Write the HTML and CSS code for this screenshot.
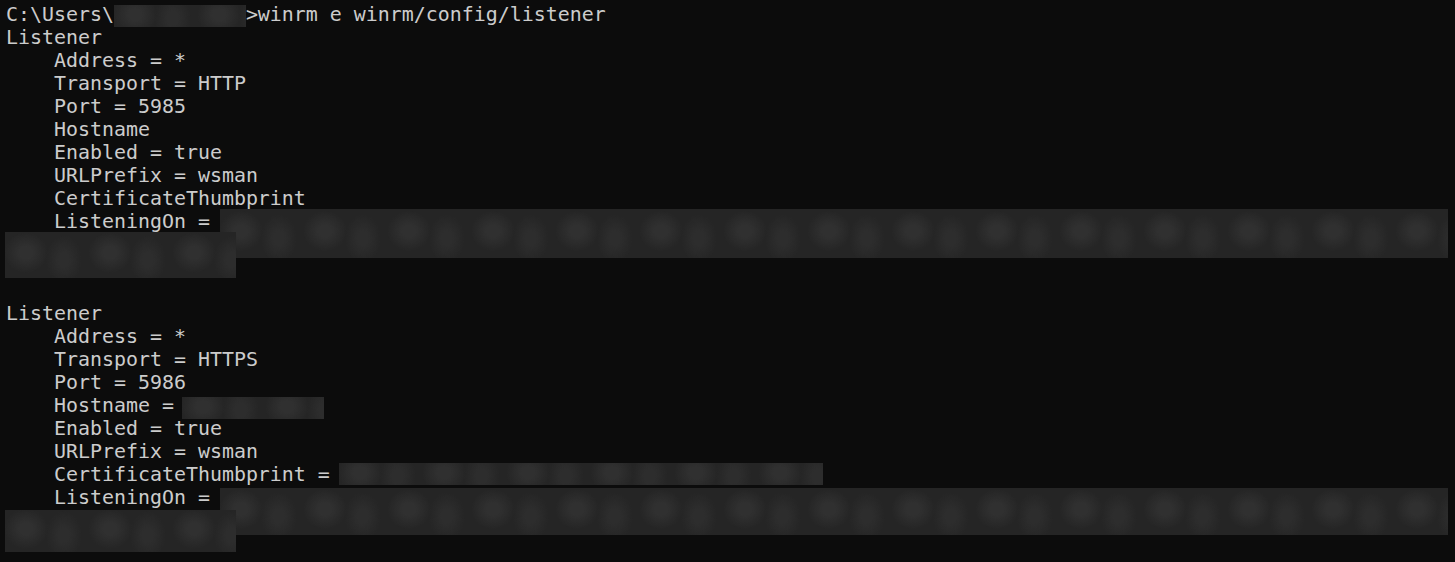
FILE: index.html
```html
<!DOCTYPE html>
<html lang="en">
<head>
<meta charset="utf-8">
<title>winrm listener</title>
<link rel="stylesheet" href="styles.css">
</head>
<body>
<main class="term">
<pre class="out">C:\Users\           &gt;winrm e winrm/config/listener
Listener
    Address = *
    Transport = HTTP
    Port = 5985
    Hostname
    Enabled = true
    URLPrefix = wsman
    CertificateThumbprint
    ListeningOn = 



Listener
    Address = *
    Transport = HTTPS
    Port = 5986
    Hostname = 
    Enabled = true
    URLPrefix = wsman
    CertificateThumbprint = 
    ListeningOn = 
</pre>
<div class="redact r-user"></div>
<div class="redact r-lo1a"></div>
<div class="redact r-lo1b"></div>
<div class="redact r-host"></div>
<div class="redact r-cert"></div>
<div class="redact r-lo2a"></div>
<div class="redact r-lo2b"></div>
</main>
</body>
</html>
```

FILE: styles.css
```css
html, body {
  margin: 0;
  padding: 0;
  background: #0c0c0c;
  height: 100%;
  overflow: hidden;
}

.term {
  position: relative;
  padding: 3px 0 0 6px;
}

.out {
  margin: 0;
  font-family: "DejaVu Sans Mono", "Liberation Mono", monospace;
  font-size: 19.93px;
  line-height: 23px;
  color: #cccccc;
  white-space: pre;
}

.redact {
  position: absolute;
  background-color: #252525;
  background-image:
    radial-gradient(ellipse 22px 20px at 25% 45%, #303030 30%, rgba(37,37,37,0) 100%),
    radial-gradient(ellipse 18px 24px at 70% 60%, #2d2d2d 30%, rgba(37,37,37,0) 100%);
  background-size: 84px 100%;
}

.r-user { left: 114px; top: 5px; width: 132px; height: 22px; }
.r-lo1a { left: 220px; top: 209px; width: 1228px; height: 49px; }
.r-lo1b { left: 5px; top: 232px; width: 231px; height: 46px; }
.r-host { left: 182px; top: 397px; width: 142px; height: 22px; }
.r-cert { left: 339px; top: 463px; width: 484px; height: 22px; }
.r-lo2a { left: 220px; top: 488px; width: 1228px; height: 47px; }
.r-lo2b { left: 5px; top: 510px; width: 231px; height: 42px; }
```
